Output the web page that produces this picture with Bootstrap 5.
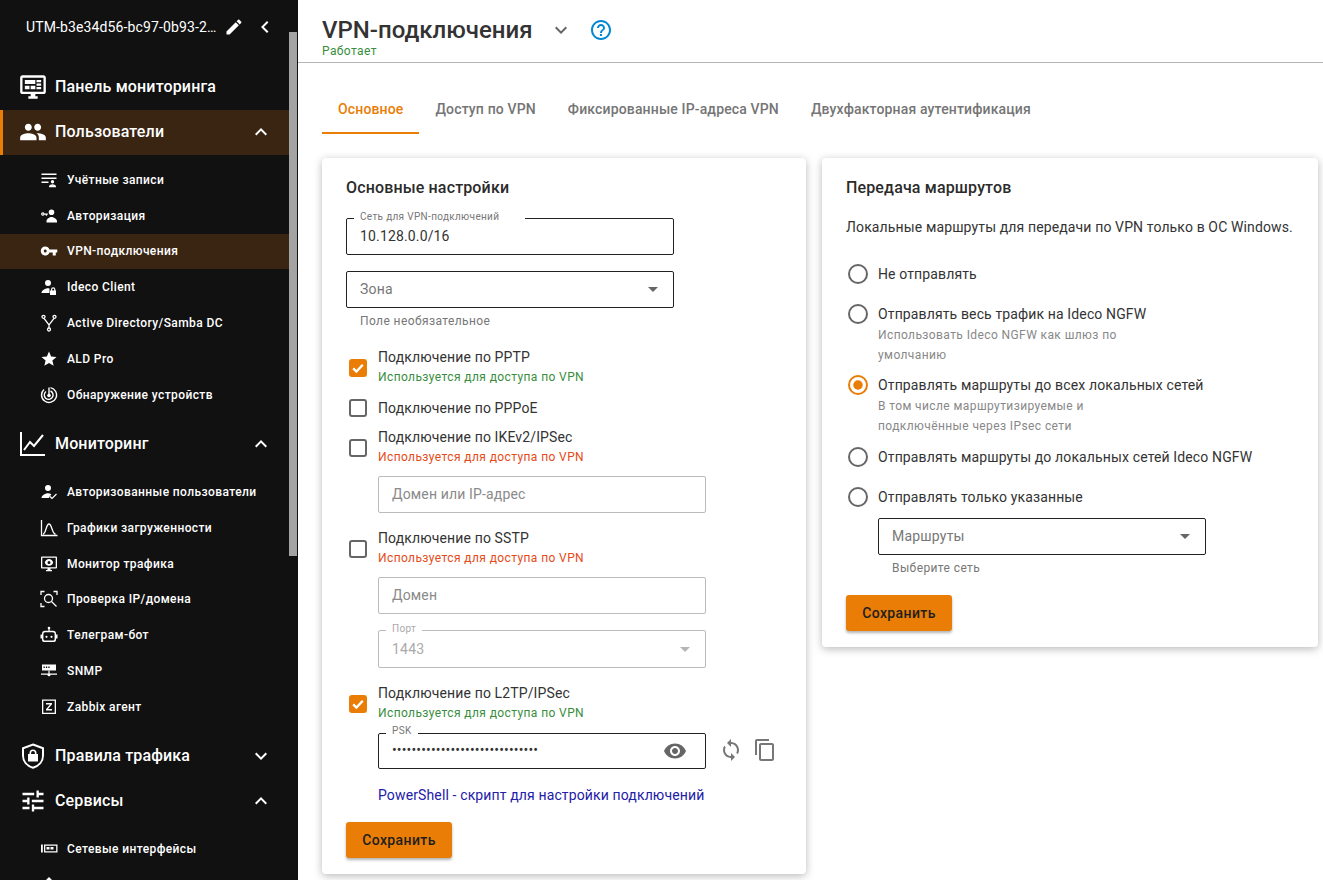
<!DOCTYPE html>
<html lang="ru">
<head>
  <meta charset="UTF-8">
  <title>VPN-подключения</title>
  <meta name="viewport" content="width=device-width, initial-scale=1">
  <link href="https://cdn.jsdelivr.net/npm/bootstrap@5.3.3/dist/css/bootstrap.min.css" rel="stylesheet">
  <style>
    html, body { height: 100%; overflow: hidden; }
    body { font-family: Roboto, "Liberation Sans", sans-serif; font-size: 14px; color: #333; background: #fff; }
    svg { fill: currentColor; flex: none; display: block; }

    /* sidebar */
    .side { width: 298px; height: 880px; background: #111; color: #fff; overflow: hidden; flex: none; }
    .side-nav { width: 289px; }
    .side-track { width: 8px; }
    .side-thumb { width: 8px; height: 524px; margin-top: 32px; background: #a3a3a3; }
    .side-head { height: 64px; padding: 0 0 10px 26px; font-size: 14px; letter-spacing: .13px; }
    .side-head span { width: 192px; white-space: nowrap; }
    .side-pen { margin-left: 6px; }
    .side-back { margin-left: 9px; }
    .main-item { height: 45px; padding: 0 16px 0 19px; font-size: 16px; font-weight: 500; letter-spacing: .15px; color: #fff; text-decoration: none; }
    .main-item > span { margin-left: 8px; flex-grow: 1; }
    .main-item.is-first { height: 46px; padding-bottom: 1px; }
    .main-item.is-open { background: #3a2513; box-shadow: inset 3px 0 0 #e97d05; padding-bottom: 2px; }
    .sub-list { padding: 8px 0 8.5px; }
    .sub-list.is-first { padding-top: 7px; }
    .sub-item { height: 35.8px; padding-left: 40px; font-size: 12px; font-weight: 500; letter-spacing: .4px; color: #fff; text-decoration: none; }
    .sub-item > span { margin-left: 9px; }
    .sub-item.is-open { background: #3a2513; }

    /* header and tabs */
    .page-head { height: 63px; padding: 16px 0 0 24px; border-bottom: 1px solid #b5b5b5; }
    .page-title { font-size: 24px; line-height: 28px; font-weight: 500; color: #333; margin: 0; }
    .page-down { margin-left: 16px; color: #666; }
    .page-help { margin-left: 16px; color: #0288d1; }
    .page-state { font-size: 12px; line-height: 14px; color: #388e3c; letter-spacing: .4px; }
    .tab-bar { margin: 22px 0 24px 24px; height: 49px; }
    .tab-bar a { padding: 0 16px; line-height: 48px; height: 49px; font-weight: 500; letter-spacing: .15px; color: #757575; text-decoration: none; }
    .tab-bar a.on { color: #e97d05; border-bottom: 2px solid #e97d05; }

    /* cards */
    .pane-row { padding-left: 24px; gap: 16px; }
    .pane { border: 0; border-radius: 4px; box-shadow: 0 2px 8px rgba(0,0,0,.28); padding: 20px 24px 16px; }
    .pane-left { width: 484px; }
    .pane-right { width: 496px; }
    .pane-title { font-size: 16px; line-height: 20px; font-weight: 500; letter-spacing: .15px; color: #2b2b2b; margin: 0 0 20px; }
    .pane-text { line-height: 20px; margin: -1px 0 27px; letter-spacing: .13px; }

    /* outlined fields */
    .fld { position: relative; width: 328px; }
    .fld input, .fld select { height: 37px; border: 1px solid #222; border-radius: 2px; padding: 0 13px 2px; font-size: 14px; color: #333; background-color: #fff; box-shadow: none; }
    .fld input { letter-spacing: .15px; }
    .fld input::placeholder { color: #8a8a8a; }
    .fld select { color: #777; padding: 0 30px 0 13px; letter-spacing: .2px; background-image: url("data:image/svg+xml,%3Csvg xmlns='http://www.w3.org/2000/svg' viewBox='0 0 10 5'%3E%3Cpath fill='%23666' d='M0 0h10L5 5z'/%3E%3C/svg%3E"); background-size: 10px 5px; background-position: right 15px center; }
    .fld label { position: absolute; left: 8px; top: -7px; padding: 0 6px; font-size: 10px; line-height: 12px; letter-spacing: .33px; color: #777; background: #fff; }
    .fld.wide label { padding-right: 26px; }
    .fld.faded input, .fld.faded select { border-color: #bbb; }
    .fld.faded select { color: #aaa; height: 38px; background-color: #fff; opacity: 1; background-image: url("data:image/svg+xml,%3Csvg xmlns='http://www.w3.org/2000/svg' viewBox='0 0 10 5'%3E%3Cpath fill='%23b5b5b5' d='M0 0h10L5 5z'/%3E%3C/svg%3E"); }
    .fld.faded label { color: #aaa; }
    .fld.psk-fld input { height: 36px; }
    .fld.psk-fld label { top: -8px; }
    .fld-note { font-size: 12px; line-height: 18px; margin: 4px 0 0 14px; color: #777; letter-spacing: .4px; }
    .fld-in { margin-left: 32px; }

    /* checks */
    .opt .form-check-input { margin: 0; flex: none; box-shadow: none; }
    .opt-c .form-check-input { width: 18px; height: 18px; margin-left: 3px; margin-right: 11px; border: 2px solid #666; border-radius: 3px; }
    .opt-c .has-hint { margin-top: 2px; }
    .opt-c .form-check-input:checked { background-color: #e97d05; border-color: #e97d05; background-size: 16px; background-image: url("data:image/svg+xml,%3Csvg xmlns='http://www.w3.org/2000/svg' viewBox='0 0 20 20'%3E%3Cpath fill='none' stroke='%23fff' stroke-width='3' d='M4 10.500l4 4 8-8.500'/%3E%3C/svg%3E"); }
    .opt-r .form-check-input { width: 20px; height: 20px; margin: 0 10px 0 2px; border: 2px solid #666; }
    .opt-r .form-check-input:checked { background-color: #fff; border-color: #e97d05; background-size: 20px; background-image: url("data:image/svg+xml,%3Csvg xmlns='http://www.w3.org/2000/svg' viewBox='-4 -4 8 8'%3E%3Ccircle r='1.9' fill='%23e97d05'/%3E%3C/svg%3E"); }
    .opt-name { line-height: 20px; display: block; color: #333; letter-spacing: .13px; }
    .opt-hint { font-size: 12px; line-height: 20px; display: block; letter-spacing: .4px; }
    .opt-r .opt-hint { margin-top: 1px; }
    .hint-ok { color: #388e3c; }
    .hint-bad { color: #e64a19; }
    .hint-gray { color: #888; }

    .go-save { width: 106px; height: 36px; padding: 0; border: 0; border-radius: 3px; background: #e97d05; color: #1e1e1e; font-size: 14px; font-weight: 500; letter-spacing: .4px; box-shadow: 0 2px 3px rgba(0,0,0,.3); }
    .go-save:hover { background: #e97d05; color: #1e1e1e; }
    .ps-link { display: block; line-height: 20px; color: #2320a8; text-decoration: none; letter-spacing: .13px; }
    .psk-eye { position: absolute; right: 19px; top: 6px; color: #666; }
    .psk-sync { margin: -2px 0 0 13px; color: #777; }
    .psk-copy { margin: -2px 0 0 10px; color: #777; }

    /* vertical rhythm of the cards */
    .gap-9 { margin-top: 9px; }
    .gap-10 { margin-top: 10px; }
    .gap-11 { margin-top: 11px; }
    .gap-15 { margin-top: 15px; }
    .gap-16 { margin-top: 16px; }
    .gap-17 { margin-top: 17px; }
    .gap-18 { margin-top: 18px; }
    .gap-20 { margin-top: 20px; }
  </style>
</head>
<body class="d-flex">

  <aside class="side d-flex">
    <div class="side-nav">
      <div class="side-head d-flex align-items-center">
        <span>UTM-b3e34d56-bc97-0b93-2…</span>
        <svg class="side-pen" width="20" height="20" viewBox="0 0 24 24"><path d="M3 17.25V21h3.75L17.81 9.94l-3.75-3.75L3 17.25zM20.71 7.04c.39-.39.39-1.02 0-1.41l-2.34-2.34c-.39-.39-1.02-.39-1.41 0l-1.83 1.83 3.75 3.75 1.83-1.83z"/></svg>
        <svg class="side-back" width="24" height="24" viewBox="0 0 24 24"><path d="M15.41 7.41L14 6l-6 6 6 6 1.41-1.41L10.83 12z"/></svg>
      </div>

      <a class="main-item is-first d-flex align-items-center" href="#">
        <svg width="28" height="28" viewBox="0 0 24 24"><path d="M21 2H3c-1.1 0-2 .9-2 2v12c0 1.1.9 2 2 2h7v2H8v2h8v-2h-2v-2h7c1.1 0 2-.9 2-2V4c0-1.1-.9-2-2-2zm0 14H3V4h18v12z"/><path d="M5 6h9v3.500H5zM15 6h4v2h-4zM15 9h4v2h-4zM15 12h4v2h-4zM5 11h4v3H5zM10 11h4v3h-4z"/></svg>
        <span>Панель мониторинга</span>
      </a>

      <a class="main-item is-open d-flex align-items-center" href="#">
        <svg width="28" height="28" viewBox="0 0 24 24"><path d="M16 11c1.66 0 2.99-1.34 2.99-3S17.66 5 16 5c-1.66 0-3 1.34-3 3s1.34 3 3 3zm-8 0c1.66 0 2.99-1.34 2.99-3S9.66 5 8 5C6.34 5 5 6.34 5 8s1.34 3 3 3zm0 2c-2.33 0-7 1.17-7 3.5V19h14v-2.5c0-2.33-4.67-3.5-7-3.5zm8 0c-.29 0-.62.02-.97.05 1.16.84 1.97 1.97 1.97 3.45V19h6v-2.5c0-2.33-4.67-3.5-7-3.5z"/></svg>
        <span>Пользователи</span>
        <svg width="24" height="24" viewBox="0 0 24 24"><path d="M12 8l-6 6 1.41 1.41L12 10.83l4.59 4.58L18 14z"/></svg>
      </a>
      <div class="sub-list is-first">
        <a class="sub-item d-flex align-items-center" href="#">
          <svg width="18" height="18" viewBox="0 0 18 18"><path d="M1.500 2.500h15v1.500h-15zM1.500 6.500h15v1.500h-15zM1.500 10.500h7v1.500h-7zM12.500 9a1.700 1.700 0 1 1 0 3.400 1.700 1.700 0 0 1 0-3.400zM9 15.500c0-1.400 2.300-2.300 3.500-2.300s3.500.9 3.500 2.300v.7H9z"/></svg>
          <span>Учётные записи</span>
        </a>
        <a class="sub-item d-flex align-items-center" href="#">
          <svg width="18" height="18" viewBox="0 0 18 18"><path d="M11.500 2.500a2.800 2.800 0 1 1 0 5.600 2.800 2.800 0 0 1 0-5.600zM6.500 14c0-2.300 3.300-4 5-4s5.500 1.700 5.500 4v1.500H6.500z"/><path fill-rule="evenodd" d="M2.800 5.200a1.800 1.800 0 0 1 1.700 1.200h3.300v1.300H7v1H5.800v-1H4.500a1.800 1.800 0 1 1-1.700-2.500zm0 1.200a.6.600 0 1 0 0 1.200.6.600 0 0 0 0-1.200z"/></svg>
          <span>Авторизация</span>
        </a>
        <a class="sub-item is-open d-flex align-items-center" href="#">
          <svg width="18" height="18" viewBox="0 0 24 24"><path d="M12.65 10C11.83 7.67 9.61 6 7 6c-3.310 0-6 2.690-6 6s2.690 6 6 6c2.610 0 4.830-1.670 5.650-4H17v4h4v-4h2v-4H12.650zM7 14c-1.100 0-2-.9-2-2s.9-2 2-2 2 .9 2 2-.9 2-2 2z"/></svg>
          <span>VPN-подключения</span>
        </a>
        <a class="sub-item d-flex align-items-center" href="#">
          <svg width="18" height="18" viewBox="0 0 18 18"><path d="M8 2a3 3 0 1 1 0 6 3 3 0 0 1 0-6zM1.500 15c0-3 4.500-4.700 6.500-4.700.5 0 1 .1 1.500.2V15z"/><path fill-rule="evenodd" d="M11 12.500v-1a2.200 2.200 0 0 1 4.400 0v1h.6V17h-6v-4.500zm1.200 0h2v-1a1 1 0 0 0-2 0z"/></svg>
          <span>Ideco Client</span>
        </a>
        <a class="sub-item d-flex align-items-center" href="#">
          <svg width="18" height="18" viewBox="0 0 18 18"><g fill="none" stroke="currentColor" stroke-width="1.300"><circle cx="3.500" cy="2.800" r="1.500"/><circle cx="14.500" cy="2.800" r="1.500"/><circle cx="9" cy="15.500" r="1.500"/><path d="M4 4.300L9 11l5-6.700M9 11v3"/></g></svg>
          <span>Active Directory/Samba DC</span>
        </a>
        <a class="sub-item d-flex align-items-center" href="#">
          <svg width="18" height="18" viewBox="0 0 24 24"><path d="M12 17.270L18.180 21l-1.640-7.030L22 9.240l-7.190-.61L12 2 9.190 8.630 2 9.240l5.460 4.730L5.820 21z"/></svg>
          <span>ALD Pro</span>
        </a>
        <a class="sub-item d-flex align-items-center" href="#">
          <svg width="18" height="18" viewBox="0 0 18 18"><g fill="none" stroke="currentColor" stroke-width="1.400"><path d="M10.500 1.600A7.500 7.500 0 1 1 4 3.400"/><path d="M10.500 5A4.400 4.400 0 1 1 6 5.500"/><path d="M9 9V1.500"/></g><circle cx="9" cy="9.500" r="1.800"/></svg>
          <span>Обнаружение устройств</span>
        </a>
      </div>

      <a class="main-item d-flex align-items-center" href="#">
        <svg width="28" height="28" viewBox="0 0 28 28"><path fill="none" stroke="currentColor" stroke-width="2" d="M2 2v23h24M5 20l6-8 4 4 9-11"/></svg>
        <span>Мониторинг</span>
        <svg width="24" height="24" viewBox="0 0 24 24"><path d="M12 8l-6 6 1.41 1.41L12 10.83l4.59 4.58L18 14z"/></svg>
      </a>
      <div class="sub-list">
        <a class="sub-item d-flex align-items-center" href="#">
          <svg width="18" height="18" viewBox="0 0 18 18"><path d="M8 2a3 3 0 1 1 0 6 3 3 0 0 1 0-6zM1.500 15c0-3 4.500-4.700 6.500-4.700 1 0 2.300.4 3.400 1L8.700 15z"/><path fill="none" stroke="currentColor" stroke-width="1.200" d="M10 13.500l2 2 4.500-4.500"/></svg>
          <span>Авторизованные пользователи</span>
        </a>
        <a class="sub-item d-flex align-items-center" href="#">
          <svg width="18" height="18" viewBox="0 0 18 18"><path fill="none" stroke="currentColor" stroke-width="1.300" d="M1.500 1v15.500h16M3 15c3 0 3-10 6-10s3 10 6.500 10"/></svg>
          <span>Графики загруженности</span>
        </a>
        <a class="sub-item d-flex align-items-center" href="#">
          <svg width="18" height="18" viewBox="0 0 18 18"><path d="M2 1.500h14a1 1 0 0 1 1 1v10a1 1 0 0 1-1 1h-5.500v1.500H12v1.200H6V15h1.500v-1.500H2a1 1 0 0 1-1-1v-10a1 1 0 0 1 1-1zm.3 1.300v9.400h13.400V2.800z"/><path d="M9 4c2 0 3.500 1.200 4.200 3.500C12.500 9.600 11 10.800 9 10.800S5.500 9.600 4.800 7.500C5.500 5.200 7 4 9 4zm0 2a1.500 1.500 0 1 0 0 3 1.500 1.500 0 0 0 0-3z"/></svg>
          <span>Монитор трафика</span>
        </a>
        <a class="sub-item d-flex align-items-center" href="#">
          <svg width="18" height="18" viewBox="0 0 18 18"><g fill="none" stroke="currentColor" stroke-width="1.300"><path d="M1 5V1.500h3.500M13.500 1.500H17V5M1 13v3.500h3.500"/><circle cx="8.500" cy="8.500" r="4"/><path d="M11.500 11.500l5 5"/></g></svg>
          <span>Проверка IP/домена</span>
        </a>
        <a class="sub-item d-flex align-items-center" href="#">
          <svg width="18" height="18" viewBox="0 0 18 18"><circle cx="9" cy="2" r="1.300"/><path d="M8.400 3h1.200v2h-1.200z"/><path fill-rule="evenodd" d="M5 4.800h8a3 3 0 0 1 3 3v.7h1.500v4H16V14a2 2 0 0 1-2 2H4a2 2 0 0 1-2-2v-1.500H.5v-4H2v-.7a3 3 0 0 1 3-3zm0 1.400a1.600 1.600 0 0 0-1.600 1.600V13c0 .9.600 1.500 1.500 1.500h8.200c.9 0 1.500-.6 1.500-1.500V7.800A1.600 1.600 0 0 0 13 6.200z"/><circle cx="6.500" cy="10.800" r="1.100"/><circle cx="11.500" cy="10.800" r="1.100"/></svg>
          <span>Телеграм-бот</span>
        </a>
        <a class="sub-item d-flex align-items-center" href="#">
          <svg width="18" height="18" viewBox="0 0 18 18"><path fill-rule="evenodd" d="M2 2.500h14v6H2zm1.500 2v1.500h1.300V4.500zm2.400 0v1.500h1.300V4.500zm2.400 0v1.500h1.300V4.500z"/><path d="M8.400 8.500h1.200v3H17v1.200H10.500a1.500 1.500 0 0 1-3 0H1v-1.200h7.400z"/></svg>
          <span>SNMP</span>
        </a>
        <a class="sub-item d-flex align-items-center" href="#">
          <svg width="18" height="18" viewBox="0 0 18 18"><path fill-rule="evenodd" d="M2 1.500h14v14.500H2zm1.300 1.300v11.900h11.400V2.800z"/><path d="M6 5h6v1.300L8 11h4v1.500H6v-1.300L10 6.500H6z"/></svg>
          <span>Zabbix агент</span>
        </a>
      </div>

      <a class="main-item d-flex align-items-center" href="#">
        <svg width="28" height="28" viewBox="0 0 28 28"><path fill="none" stroke="currentColor" stroke-width="2" d="M14 2.500l10 3.800v7.200c0 5.800-4 10.500-10 12.200-6-1.700-10-6.400-10-12.200V6.300z"/><path fill-rule="evenodd" d="M10.500 12v-1a3.500 3.500 0 0 1 7 0v1H19v7.500H9V12zm1.600 0h3.800v-1a1.900 1.900 0 0 0-3.800 0z"/></svg>
        <span>Правила трафика</span>
        <svg width="24" height="24" viewBox="0 0 24 24"><path d="M16.590 8.590L12 13.170 7.410 8.590 6 10l6 6 6-6z"/></svg>
      </a>
      <a class="main-item d-flex align-items-center" href="#">
        <svg width="28" height="28" viewBox="0 0 24 24"><path d="M3 17v2h6v-2H3zM3 5v2h10V5H3zm10 16v-2h8v-2h-8v-2h-2v6h2zM7 9v2H3v2h4v2h2V9H7zm14 4v-2H11v2h10zm-6-4h2V7h4V5h-4V3h-2v6z"/></svg>
        <span>Сервисы</span>
        <svg width="24" height="24" viewBox="0 0 24 24"><path d="M12 8l-6 6 1.410 1.410L12 10.830l4.590 4.580L18 14z"/></svg>
      </a>
      <div class="sub-list">
        <a class="sub-item d-flex align-items-center" href="#">
          <svg width="18" height="18" viewBox="0 0 18 18"><path fill-rule="evenodd" d="M4 4.500h13.500v8H4zm1.300 1.300v5.400h10.900V5.800zM6.500 7h3v2.500h-3zM10.500 7h3v2.500h-3zM1 4.500h1.800v8H1z"/></svg>
          <span>Сетевые интерфейсы</span>
        </a>
        <a class="sub-item d-flex align-items-center" href="#">
          <svg width="18" height="18" viewBox="0 0 18 18"><path d="M9 1l7 7H2z"/></svg>
        </a>
      </div>
    </div>
    <div class="side-track"><div class="side-thumb"></div></div>
  </aside>

  <main class="flex-grow-1">
    <header class="page-head">
      <div class="d-flex align-items-center">
        <h1 class="page-title">VPN-подключения</h1>
        <svg class="page-down" width="24" height="24" viewBox="0 0 24 24"><path d="M16.590 8.590L12 13.170 7.410 8.590 6 10l6 6 6-6z"/></svg>
        <svg class="page-help" width="24" height="24" viewBox="0 0 24 24"><path d="M11 18h2v-2h-2v2zm1-16C6.480 2 2 6.480 2 12s4.480 10 10 10 10-4.480 10-10S17.520 2 12 2zm0 18c-4.410 0-8-3.590-8-8s3.590-8 8-8 8 3.590 8 8-3.590 8-8 8zm0-14c-2.210 0-4 1.790-4 4h2c0-1.100.9-2 2-2s2 .9 2 2c0 2-3 1.750-3 5h2c0-2.250 3-2.500 3-5 0-2.210-1.790-4-4-4z"/></svg>
      </div>
      <div class="page-state">Работает</div>
    </header>

    <nav class="tab-bar d-flex">
      <a class="on" href="#">Основное</a>
      <a href="#">Доступ по VPN</a>
      <a href="#">Фиксированные IP-адреса VPN</a>
      <a href="#">Двухфакторная аутентификация</a>
    </nav>

    <div class="pane-row d-flex align-items-start">
      <section class="card pane pane-left">
        <h2 class="pane-title">Основные настройки</h2>

        <div class="fld wide">
          <label for="net">Сеть для VPN-подключений</label>
          <input id="net" class="form-control" value="10.128.0.0/16">
        </div>
        <div class="fld gap-16">
          <select class="form-select"><option>Зона</option></select>
        </div>
        <div class="fld-note">Поле необязательное</div>

        <div class="opt opt-c d-flex align-items-center gap-17">
          <input class="form-check-input has-hint" type="checkbox" checked>
          <div><span class="opt-name">Подключение по PPTP</span><span class="opt-hint hint-ok">Используется для доступа по VPN</span></div>
        </div>
        <div class="opt opt-c d-flex align-items-center gap-11">
          <input class="form-check-input" type="checkbox">
          <div><span class="opt-name">Подключение по PPPoE</span></div>
        </div>
        <div class="opt opt-c d-flex align-items-center gap-9">
          <input class="form-check-input has-hint" type="checkbox">
          <div><span class="opt-name">Подключение по IKEv2/IPSec</span><span class="opt-hint hint-bad">Используется для доступа по VPN</span></div>
        </div>
        <div class="fld fld-in faded gap-9">
          <input class="form-control" placeholder="Домен или IP-адрес">
        </div>
        <div class="opt opt-c d-flex align-items-center gap-15">
          <input class="form-check-input has-hint" type="checkbox">
          <div><span class="opt-name">Подключение по SSTP</span><span class="opt-hint hint-bad">Используется для доступа по VPN</span></div>
        </div>
        <div class="fld fld-in faded gap-9">
          <input class="form-control" placeholder="Домен">
        </div>
        <div class="fld fld-in faded gap-16">
          <label>Порт</label>
          <select class="form-select" disabled><option>1443</option></select>
        </div>
        <div class="opt opt-c d-flex align-items-center gap-15">
          <input class="form-check-input has-hint" type="checkbox" checked>
          <div><span class="opt-name">Подключение по L2TP/IPSec</span><span class="opt-hint hint-ok">Используется для доступа по VPN</span></div>
        </div>
        <div class="d-flex align-items-center gap-10">
          <div class="fld fld-in psk-fld">
            <label for="psk">PSK</label>
            <input id="psk" class="form-control" type="password" value="ideco-l2tp-preshared-secret-ke">
            <svg class="psk-eye" width="24" height="24" viewBox="0 0 24 24"><path d="M12 4.500C7 4.500 2.730 7.610 1 12c1.730 4.390 6 7.500 11 7.500s9.270-3.110 11-7.500c-1.730-4.390-6-7.500-11-7.500zM12 17c-2.760 0-5-2.240-5-5s2.240-5 5-5 5 2.240 5 5-2.240 5-5 5zm0-8c-1.660 0-3 1.340-3 3s1.340 3 3 3 3-1.340 3-3-1.340-3-3-3z"/></svg>
          </div>
          <svg class="psk-sync" width="24" height="24" viewBox="0 0 24 24"><path d="M12 4V1L8 5l4 4V6c3.310 0 6 2.690 6 6 0 1.010-.25 1.970-.7 2.800l1.460 1.460C19.540 15.030 20 13.570 20 12c0-4.420-3.580-8-8-8zm0 14c-3.310 0-6-2.690-6-6 0-1.010.25-1.970.7-2.800L5.240 7.740C4.460 8.970 4 10.430 4 12c0 4.420 3.580 8 8 8v3l4-4-4-4v3z"/></svg>
          <svg class="psk-copy" width="24" height="24" viewBox="0 0 24 24"><path d="M16 1H4c-1.100 0-2 .9-2 2v14h2V3h12V1zm3 4H8c-1.100 0-2 .9-2 2v14c0 1.100.9 2 2 2h11c1.100 0 2-.9 2-2V7c0-1.100-.9-2-2-2zm0 16H8V7h11v14z"/></svg>
        </div>
        <div class="fld-in gap-16"><a class="ps-link" href="#">PowerShell - скрипт для настройки подключений</a></div>
        <div class="gap-17"><button class="btn go-save d-block" type="button">Сохранить</button></div>
      </section>

      <section class="card pane pane-right">
        <h2 class="pane-title">Передача маршрутов</h2>
        <p class="pane-text">Локальные маршруты для передачи по VPN только в ОС Windows.</p>

        <div class="opt opt-r d-flex align-items-center">
          <input class="form-check-input" type="radio" name="routes">
          <span class="opt-name">Не отправлять</span>
        </div>
        <div class="opt opt-r d-flex gap-20">
          <input class="form-check-input" type="radio" name="routes">
          <div><span class="opt-name">Отправлять весь трафик на Ideco NGFW</span><span class="opt-hint hint-gray">Использовать Ideco NGFW как шлюз по<br>умолчанию</span></div>
        </div>
        <div class="opt opt-r d-flex gap-10">
          <input class="form-check-input" type="radio" name="routes" checked>
          <div><span class="opt-name">Отправлять маршруты до всех локальных сетей</span><span class="opt-hint hint-gray">В том числе маршрутизируемые и<br>подключённые через IPsec сети</span></div>
        </div>
        <div class="opt opt-r d-flex align-items-center gap-11">
          <input class="form-check-input" type="radio" name="routes">
          <span class="opt-name">Отправлять маршруты до локальных сетей Ideco NGFW</span>
        </div>
        <div class="opt opt-r d-flex align-items-center gap-20">
          <input class="form-check-input" type="radio" name="routes">
          <span class="opt-name">Отправлять только указанные</span>
        </div>
        <div class="fld fld-in gap-11">
          <select class="form-select"><option>Маршруты</option></select>
        </div>
        <div class="fld-in"><div class="fld-note">Выберите сеть</div></div>
        <div class="gap-18"><button class="btn go-save d-block" type="button">Сохранить</button></div>
      </section>
    </div>
  </main>

  <script src="https://cdn.jsdelivr.net/npm/bootstrap@5.3.3/dist/js/bootstrap.bundle.min.js"></script>
</body>
</html>
